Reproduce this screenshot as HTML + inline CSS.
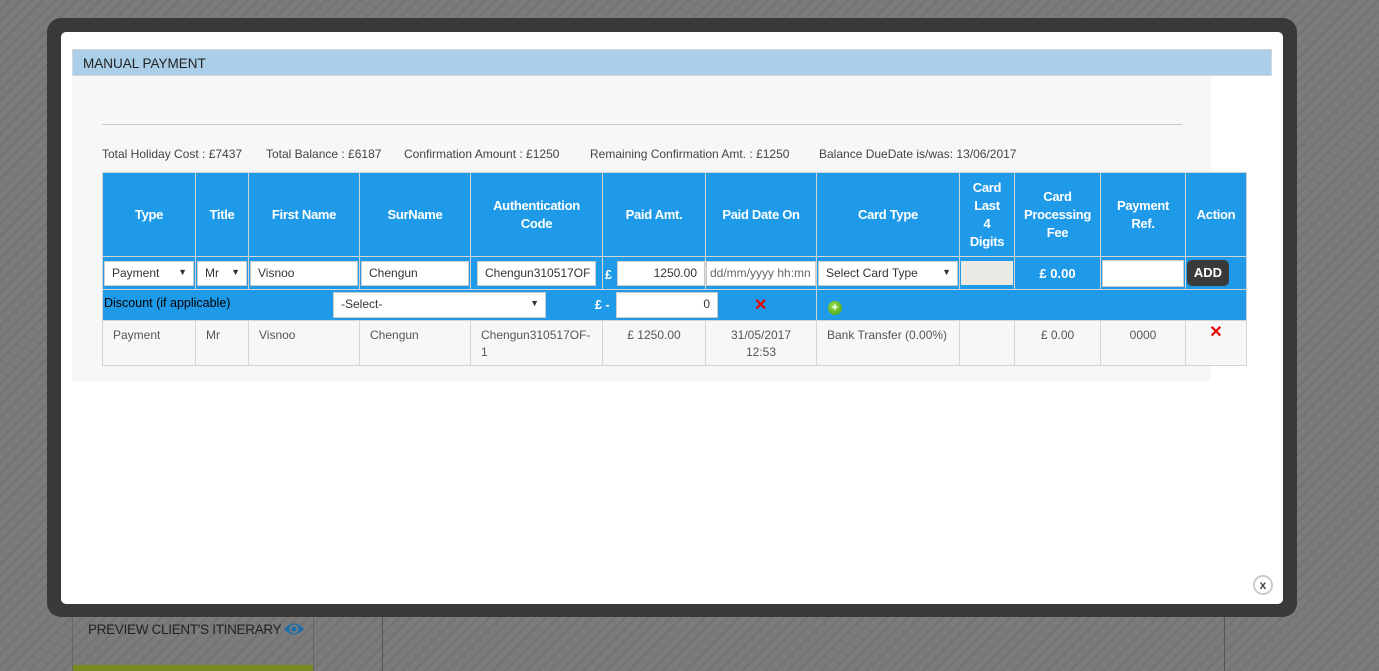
<!DOCTYPE html>
<html><head><meta charset="utf-8"><style>
*{box-sizing:border-box;margin:0;padding:0}
body{width:1379px;height:671px;overflow:hidden;position:relative;font-family:"Liberation Sans",sans-serif;
background:#7b7b7b repeating-linear-gradient(135deg,#7b7b7b 0 6px,#737373 6px 8px)}
.abs{position:absolute}
.frame{left:47px;top:18px;width:1250px;height:599px;background:#393939;border-radius:14px}
.inner{left:61px;top:32px;width:1222px;height:572px;background:#fff;border-radius:5px}
.hdr{left:72px;top:49px;width:1200px;height:27px;background:#abcee9;border:1px solid #d3d7da;font-size:13.5px;color:#222;padding:6px 10px}
.panel{left:72px;top:76px;width:1139px;height:305px;background:#f7f7f7}
.line{left:102px;top:124px;width:1080px;height:1px;background:#c8c8c8}
.info{top:147px;font-size:12px;color:#444}
table{position:absolute;left:102px;top:172px;border-collapse:collapse;table-layout:fixed;width:1144px}
td,th{border:1px solid #d4d4d4;font-size:12.5px}
th{background:#1f9ae9;color:#fff;height:84px;font-weight:bold;text-align:center;line-height:18px;font-size:13px;letter-spacing:-.3px}
tr.in td{background:#1f9ae9;height:33px;padding:0 1px;}
tr.ds td{background:#1f9ae9;height:31px;border-left:none;border-right:none;padding:0}
tr.dt td{background:#f7f7f7;height:45px;vertical-align:top;color:#555;padding:6px 10px 0;line-height:17px;font-size:12px}
.box{background:#fff;border:1px solid #ccc;height:25px;font-size:12px;color:#333;padding:4px 7px;position:relative;white-space:nowrap;overflow:hidden}
.arr{position:absolute;right:6px;top:5px;font-size:9px;color:#333}
.x{color:#e00;font-weight:bold;font-size:16px}
</style></head><body>
<div class="abs" style="left:72px;top:604px;width:242px;height:67px;border-left:1px solid #666;border-right:1px solid #666"></div>
<div class="abs" style="left:73px;top:665px;width:240px;height:6px;background:#7a8a1e"></div>
<div class="abs" style="left:382px;top:604px;width:1px;height:67px;background:#555"></div>
<div class="abs" style="left:1224px;top:604px;width:1px;height:67px;background:#555"></div>
<div class="abs" style="left:88px;top:622px;font-size:13.5px;color:#222;letter-spacing:-.3px">PREVIEW CLIENT'S ITINERARY</div>
<svg class="abs" style="left:283px;top:621px" width="22" height="16" viewBox="0 0 22 16"><path d="M1 8Q11-3 21 8Q11 19 1 8Z" fill="#1f6ea8"/><circle cx="11" cy="8" r="4.5" fill="#7b7b7b"/><circle cx="11" cy="8" r="2.5" fill="#1f6ea8"/></svg>
<div class="abs frame"></div>
<div class="abs inner"></div>
<div class="abs hdr">MANUAL PAYMENT</div>
<div class="abs panel"></div>
<div class="abs line"></div>
<div class="abs info" style="left:102px">Total Holiday Cost : £7437</div>
<div class="abs info" style="left:266px">Total Balance : £6187</div>
<div class="abs info" style="left:404px">Confirmation Amount : £1250</div>
<div class="abs info" style="left:590px">Remaining Confirmation Amt. : £1250</div>
<div class="abs info" style="left:819px">Balance DueDate is/was: 13/06/2017</div>
<table>
<colgroup><col style="width:93px"><col style="width:53px"><col style="width:111px"><col style="width:111px"><col style="width:132px"><col style="width:103px"><col style="width:111px"><col style="width:143px"><col style="width:55px"><col style="width:86px"><col style="width:85px"><col style="width:61px"></colgroup>
<tr><th>Type</th><th>Title</th><th>First Name</th><th>SurName</th><th>Authentication<br>Code</th><th>Paid Amt.</th><th>Paid Date On</th><th>Card Type</th><th>Card<br>Last<br>4<br>Digits</th><th>Card<br>Processing<br>Fee</th><th>Payment<br>Ref.</th><th>Action</th></tr>
<tr class="in">
<td><div class="box">Payment<span class="arr">▼</span></div></td>
<td><div class="box">Mr<span class="arr">▼</span></div></td>
<td><div class="box">Visnoo</div></td>
<td><div class="box">Chengun</div></td>
<td style="padding:0 6px"><div class="box">Chengun310517OF</div></td>
<td style="padding:0"><span style="color:#fff;font-weight:bold;float:left;padding:7px 3px 0 2px">£</span><div class="box" style="text-align:right;margin-left:14px">1250.00</div></td>
<td style="padding:0"><div class="box" style="color:#666;padding:4px 3px">dd/mm/yyyy hh:mn</div></td>
<td><div class="box" style="width:140px">Select Card Type<span class="arr">▼</span></div></td>
<td><div style="background:#eae9e4;height:24px"></div></td>
<td style="color:#fff;font-weight:bold;text-align:center;font-size:13px">£ 0.00</td>
<td><div class="box" style="height:27px"></div></td>
<td><div style="background:#3a3a3a;color:#fff;border-radius:5px;width:42px;height:26px;font-size:13px;font-weight:bold;text-align:center;line-height:26px">ADD</div></td>
</tr>
<tr class="ds">
<td colspan="7" style="position:relative;border-left:1px solid #d4d4d4">
<span class="abs" style="left:1px;top:6px;font-size:12.5px;color:#000">Discount (if applicable)</span>
<div class="box" style="position:absolute;left:230px;top:2px;width:213px;height:26px">-Select-<span class="arr">▼</span></div>
<span class="abs" style="left:492px;top:8px;color:#fff;font-weight:bold;font-size:12.5px">£ -</span>
<div class="box" style="position:absolute;left:513px;top:2px;width:102px;height:26px;text-align:right">0</div>
<span class="abs x" style="left:651px;top:5px">✕</span>
</td>
<td colspan="5" style="position:relative;border-left:1px solid #d4d4d4;border-right:1px solid #d4d4d4">
<span class="abs" style="left:11px;top:11px;width:14px;height:14px;border-radius:50%;background:radial-gradient(circle at 40% 35%,#9be04a,#3c9a12);color:#fff;font-size:11px;font-weight:bold;line-height:14px;text-align:center">+</span>
</td></tr>
<tr class="dt">
<td>Payment</td><td>Mr</td><td>Visnoo</td><td>Chengun</td><td>Chengun310517OF-1</td>
<td style="text-align:center">£ 1250.00</td><td style="text-align:center">31/05/2017<br>12:53</td>
<td>Bank Transfer (0.00%)</td><td></td><td style="text-align:center">£ 0.00</td><td style="text-align:center">0000</td>
<td style="text-align:center;padding-top:3px"><span class="x">✕</span></td>
</tr>
</table>
<div class="abs" style="left:1253px;top:575px;width:20px;height:20px;border-radius:50%;border:2px solid #ccc;background:#fff;text-align:center;font-size:12px;font-weight:bold;line-height:16px;color:#444">x</div>
</body></html>
